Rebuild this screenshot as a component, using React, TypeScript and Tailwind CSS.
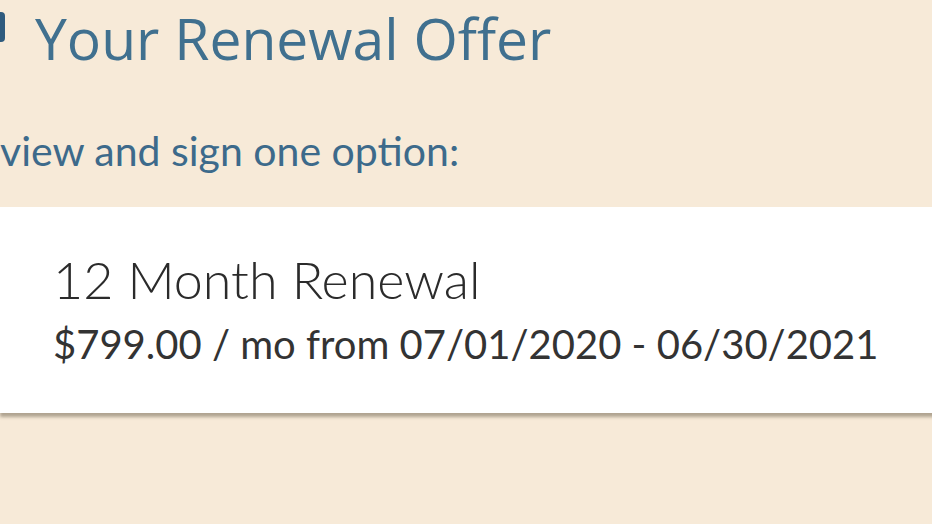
import React from 'react';

export default function App() {
  return (
    <div className="w-[932px] h-[524px] overflow-hidden bg-[#f7ead8] font-['Lato',sans-serif]">
      {/* Header */}
      <div className="flex items-start pt-[10px]">
        <div className="w-[5px] h-[30px] mt-[2px] bg-[#2f5b7e] rounded-r-sm" />
        <h1 className="ml-[30px] text-[57px] leading-none font-normal text-[#40708f] font-['Open_Sans',sans-serif]">
          Your Renewal Offer
        </h1>
      </div>

      {/* Instructions */}
      <p className="mt-[63px] text-[41px] leading-none text-[#3d6a8b]">
        view and sign one option:
      </p>

      {/* Option card */}
      <div className="mt-[36px] mr-[-20px] h-[206px] bg-white shadow-[0_4px_3px_rgba(90,80,60,0.45)] pl-[53px] pt-[46px]">
        <div className="text-[52px] leading-none font-light text-[#2b2b2b]">12 Month Renewal</div>
        <div className="mt-[19px] text-[40px] leading-none text-[#333333]">
          $799.00 / mo from 07/01/2020 - 06/30/2021
        </div>
      </div>
    </div>
  );
}
